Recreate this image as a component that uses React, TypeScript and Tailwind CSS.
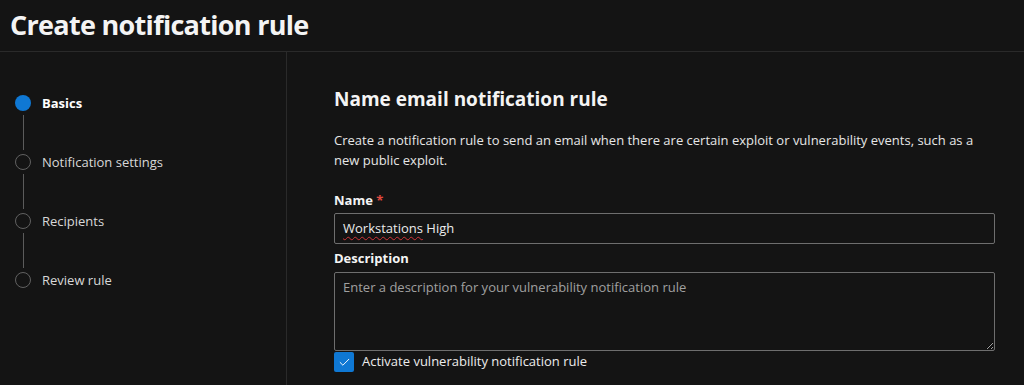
import { Check } from 'lucide-react';

const steps = [
  { id: 1, label: "Basics", active: true },
  { id: 2, label: "Notification settings", active: false },
  { id: 3, label: "Recipients", active: false },
  { id: 4, label: "Review rule", active: false },
];

function Stepper() {
  return (
    <div className="flex flex-col pl-[15px] pt-[43px]">
      {steps.map((step, i) => (
        <div key={step.id} className="flex gap-[11px]">
          <div className="flex flex-col items-center w-[16px]">
            {step.active ? (
              <div className="w-[16px] h-[16px] rounded-full bg-[#0f78d4]" />
            ) : (
              <div className="w-[16px] h-[16px] rounded-full border-[1.5px] border-[#616161]" />
            )}
            {i < steps.length - 1 && (
              <div className="w-px h-[35px] my-[4px] bg-[#5b5b5b]" />
            )}
          </div>
          <div
            className={`text-[13px] leading-[16px] ${
              step.active ? "font-bold text-white" : "text-[#d8d8d8]"
            }`}
          >
            {step.label}
          </div>
        </div>
      ))}
    </div>
  );
}

export default function App() {
  return (
    <div
      className="w-[1024px] h-[385px] overflow-hidden bg-[#141414] text-white"
      style={{ fontFamily: '"Open Sans", "Noto Sans", sans-serif' }}
    >
      <header className="h-[52px] border-b border-[#2a2a2a] px-[10px] flex items-center">
        <h1 className="text-[27px] font-bold text-[#f4f4f4] tracking-[-0.7px]">Create notification rule</h1>
      </header>

      <div className="flex h-[333px]">
        <aside className="w-[287px] shrink-0 border-r border-[#2a2a2a]">
          <Stepper />
        </aside>

        <main className="pl-[47px] pt-[33px] w-[708px]">
          <h2 className="text-[19px] leading-[28px] font-bold text-[#f4f4f4]">Name email notification rule</h2>
          <p className="mt-[17px] text-[13px] leading-[20px] text-[#e6e6e6]">
            Create a notification rule to send an email when there are certain exploit or vulnerability events, such as a new public exploit.
          </p>

          <label className="block mt-[20px] text-[13px] leading-[20px] font-bold text-[#f4f4f4]">
            Name <span className="text-[#e04a3f]">*</span>
          </label>
          <div className="mt-[3px] h-[31px] border border-[#6e6e6e] rounded-[2px] flex items-center px-[8px] text-[13px] text-[#ececec]">
            <span className="underline decoration-wavy decoration-[#d13438] decoration-1 underline-offset-[3px]">Workstations</span>
            <span>&nbsp;High</span>
          </div>

          <label className="block mt-[4px] text-[13px] leading-[20px] font-bold text-[#f4f4f4]">Description</label>
          <textarea
            className="mt-[4px] block w-full h-[79px] bg-transparent border border-[#6e6e6e] rounded-[2px] px-[8px] py-[5px] text-[13px] text-[#ececec] placeholder:text-[#a0a0a0] outline-none"
            placeholder="Enter a description for your vulnerability notification rule"
          />

          <div className="mt-[1px] flex items-center gap-[8px]">
            <div className="w-[20px] h-[20px] rounded-[2px] bg-[#0f78d4] flex items-center justify-center">
              <Check size={13} strokeWidth={1.75} className="text-white" />
            </div>
            <span className="text-[13px] text-[#ececec]">Activate vulnerability notification rule</span>
          </div>
        </main>
      </div>
    </div>
  );
}
